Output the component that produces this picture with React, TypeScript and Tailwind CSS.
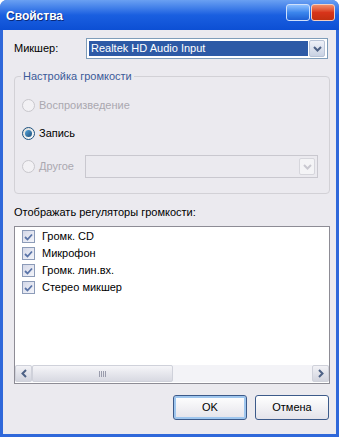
const font = { fontFamily: '"Liberation Sans", Tahoma, sans-serif' };

function Chevron({ disabled }: { disabled?: boolean }) {
  return (
    <svg width="9" height="6" viewBox="0 0 9 6">
      <path d="M1 1 L4.5 4.5 L8 1" fill="none" stroke={disabled ? "#c9c8d0" : "#4d6185"} strokeWidth="2" />
    </svg>
  );
}

function Radio({ checked, disabled, label }: { checked?: boolean; disabled?: boolean; label: string }) {
  return (
    <div className="flex h-[14px] items-center gap-[4px]">
      <span
        className={`flex h-[13px] w-[13px] items-center justify-center rounded-full border ${
          disabled ? "border-[#c8c7cc] bg-[#f2f1f4]" : "border-[#1c5180] bg-gradient-to-br from-[#dcdcd7] to-white"
        }`}
      >
        {checked && <span className="h-[7px] w-[7px] rounded-full bg-gradient-to-br from-[#55a6dd] to-[#1f4f7a]" />}
      </span>
      <span className={disabled ? "text-[#aaa8b0]" : "text-black"}>{label}</span>
    </div>
  );
}

function Check({ label }: { label: string }) {
  return (
    <div className="flex h-[17px] items-center gap-[7px]">
      <span className="flex h-[13px] w-[13px] items-center justify-center border border-[#8c9bb8] bg-gradient-to-br from-[#d4d8e8] to-[#f4f5fa]">
        <svg width="9" height="8" viewBox="0 0 9 8">
          <path d="M1 4 L3.5 6.5 L8 1.5" fill="none" stroke="#5a74a8" strokeWidth="1.8" />
        </svg>
      </span>
      <span>{label}</span>
    </div>
  );
}

export default function App() {
  return (
    <div className="h-[438px] w-[343px] bg-white" style={font}>
      <div className="flex h-[437px] w-[339px] flex-col rounded-t-[7px] bg-[#2f68da]">
        <div className="flex h-[30px] items-start justify-between rounded-t-[7px] bg-gradient-to-b from-[#6aa0f2] via-[#1a5fe0] to-[#0c4fd4] pl-[6px] pr-[4px] pt-[4px]">
          <span className="mt-[3px] text-[12px] font-bold text-white [text-shadow:1px_1px_#0a2a7a]">Свойства</span>
          <div className="flex gap-[1px]">
            <span className="h-[17px] w-[24px] rounded-[3px] border border-[#cfe0fb] bg-gradient-to-b from-[#8ec0ff] via-[#3c86ec] to-[#1f5fd4]" />
            <span className="h-[17px] w-[24px] rounded-[3px] border border-[#f5cfc0] bg-gradient-to-b from-[#f28c68] via-[#d8341a] to-[#c23010]" />
          </div>
        </div>
        <div className="mx-[3px] mb-[3px] flex flex-1 flex-col bg-[#ebeaef] pl-[11px] pr-[6px] pt-[8px] text-[11px] text-black">
          <div className="flex h-[21px] items-center pr-[2px]">
            <span className="w-[72px]">Микшер:</span>
            <div className="flex h-[21px] flex-1 items-center border border-[#7f9db9] bg-white p-[2px]">
              <span className="flex h-full flex-1 items-center bg-[#2d5aa6] pl-[2px] text-white">Realtek HD Audio Input</span>
              <span className="ml-[1px] flex h-[17px] w-[16px] items-center justify-center rounded-[2px] border border-[#b8c3d6] bg-gradient-to-b from-[#eef1f8] to-[#c9d2e3]">
                <Chevron />
              </span>
            </div>
          </div>

          <div className="relative mt-[17px] h-[118px] rounded-[4px] border border-[#d2d1d6] pl-[7px] pr-[11px] pt-[21px]">
            <span className="absolute -top-[8px] left-[6px] bg-[#ebeaef] px-[2px] leading-[14px] text-[#3b5b99]">Настройка громкости</span>
            <Radio disabled label="Воспроизведение" />
            <div className="mt-[14px]">
              <Radio checked label="Запись" />
            </div>
            <div className="mt-[15px] flex items-center">
              <div className="w-[63px]">
                <Radio disabled label="Другое" />
              </div>
              <div className="flex h-[23px] flex-1 items-center border border-[#c9c8cf] bg-[#ebeaef] p-[2px]">
                <span className="flex-1" />
                <span className="flex h-[17px] w-[16px] items-center justify-center rounded-[2px] border border-[#d6d6dc] bg-[#f4f4f6]">
                  <Chevron disabled />
                </span>
              </div>
            </div>
          </div>

          <div className="mt-[12px] leading-[13px]">Отображать регуляторы громкости:</div>
          <div className="mt-[7px] flex h-[158px] flex-col border border-[#8d8c95] bg-white">
            <div className="flex-1 px-[7px] pt-[1px]">
              <Check label="Громк. CD" />
              <Check label="Микрофон" />
              <Check label="Громк. лин.вх." />
              <Check label="Стерео микшер" />
            </div>
            <div className="mb-[1px] flex h-[17px] bg-[#f3f3f7]">
              <span className="flex w-[17px] items-center justify-center rounded-[2px] border border-[#cfd1da] bg-gradient-to-b from-[#f2f2f6] to-[#d2d4de]">
                <svg width="6" height="9" viewBox="0 0 6 9"><path d="M5 1 L1.5 4.5 L5 8" fill="none" stroke="#4d6185" strokeWidth="2" /></svg>
              </span>
              <span className="flex w-[141px] items-center justify-center rounded-[2px] border border-[#cfd1da] bg-gradient-to-b from-[#f5f5f8] to-[#d8d9e2]">
                <span className="flex gap-[1px]">
                  <span className="h-[6px] w-[1px] bg-[#9a9cac]" />
                  <span className="h-[6px] w-[1px] bg-[#9a9cac]" />
                  <span className="h-[6px] w-[1px] bg-[#9a9cac]" />
                  <span className="h-[6px] w-[1px] bg-[#9a9cac]" />
                </span>
              </span>
              <span className="flex-1" />
              <span className="flex w-[17px] items-center justify-center rounded-[2px] border border-[#cfd1da] bg-gradient-to-b from-[#f2f2f6] to-[#d2d4de]">
                <svg width="6" height="9" viewBox="0 0 6 9"><path d="M1 1 L4.5 4.5 L1 8" fill="none" stroke="#4d6185" strokeWidth="2" /></svg>
              </span>
            </div>
          </div>

          <div className="mt-[11px] flex justify-end gap-[8px] pr-[1px]">
            <button className="h-[25px] w-[74px] rounded-[3px] border border-[#3c5a8a] bg-gradient-to-b from-white to-[#e4e3ea] shadow-[inset_0_0_0_2px_#9fc6ee]">
              OK
            </button>
            <button className="h-[25px] w-[74px] rounded-[3px] border border-[#3c5a8a] bg-gradient-to-b from-white to-[#e4e3ea]">
              Отмена
            </button>
          </div>
        </div>
      </div>
    </div>
  );
}
